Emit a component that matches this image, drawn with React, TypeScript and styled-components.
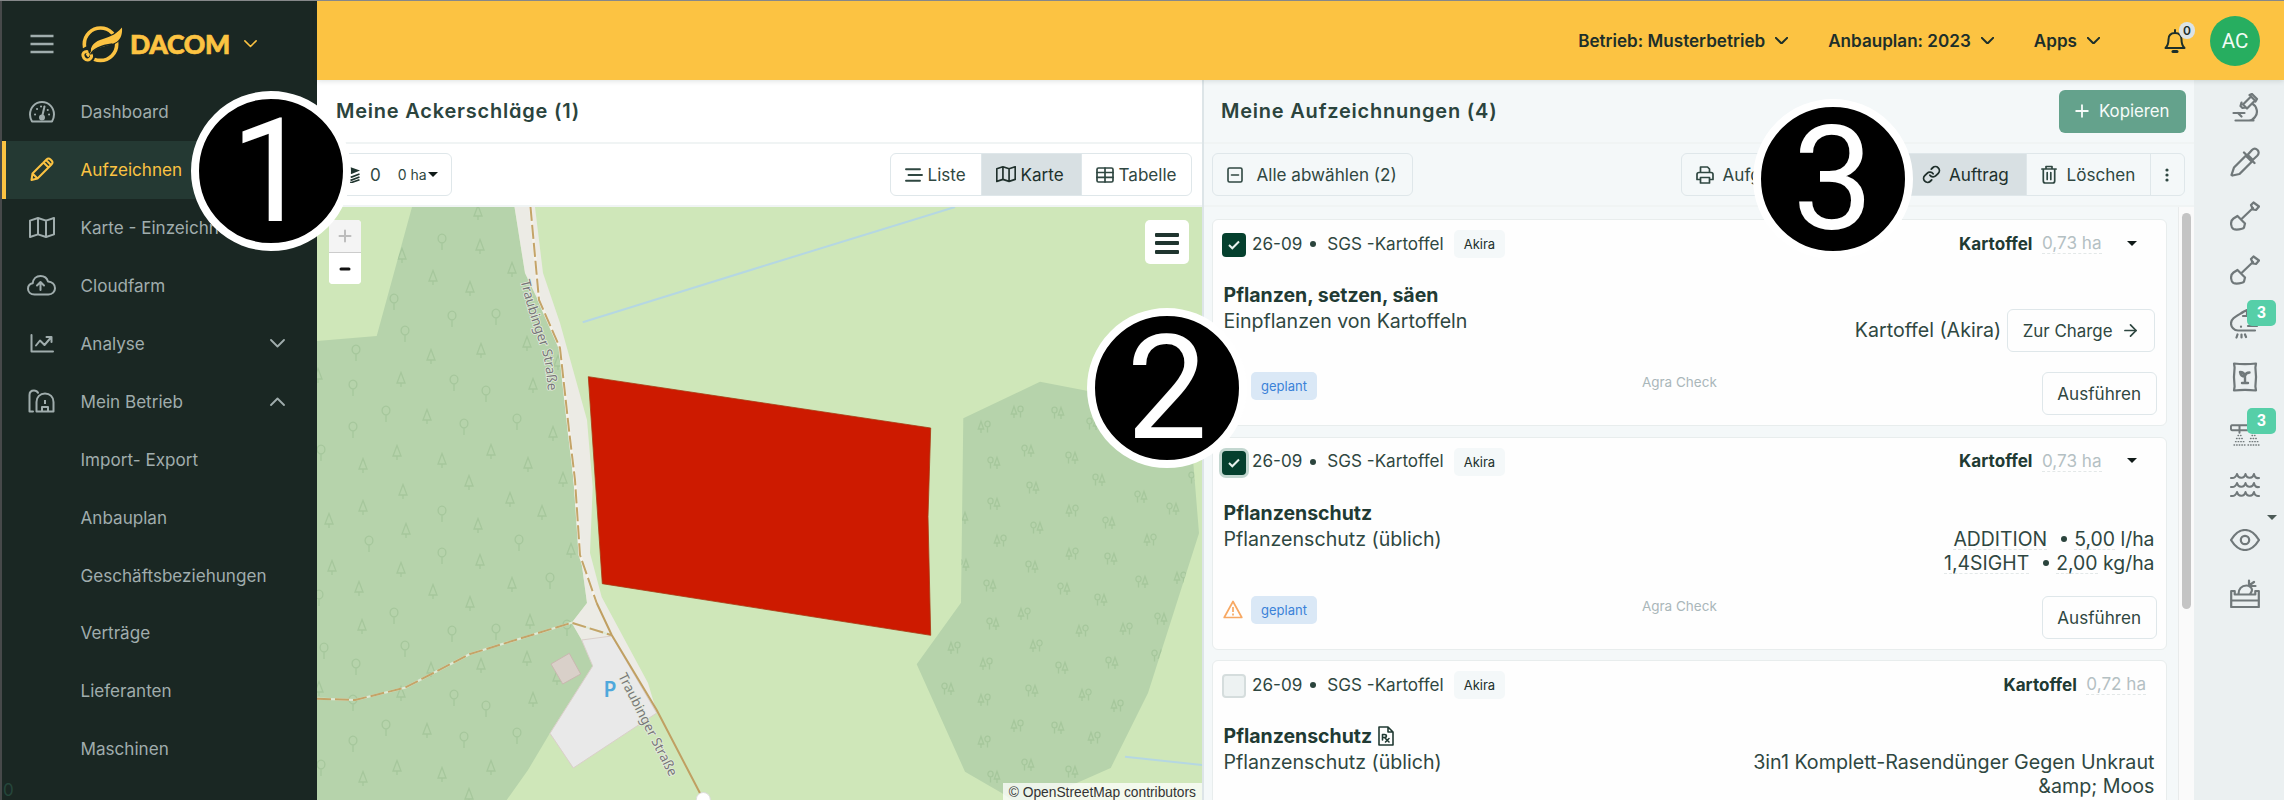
import React from "react";
import styled, { createGlobalStyle, css } from "styled-components";
import { ArrowRight, Plus } from "lucide-react";

const GlobalStyle = createGlobalStyle`
  * { box-sizing: border-box; }
  html, body { margin: 0; padding: 0; overflow: hidden; }
  body { font-family: Inter, "Liberation Sans", sans-serif; font-size: 17.1px; color: #2f4741; background: #fff; }
`;

/* ---------- shell ---------- */

const Shell = styled.div`
  position: relative;
  display: flex;
  width: 2284px;
  height: 800px;
  overflow: hidden;
  border-top: 1px solid #86888a;
`;

const Main = styled.div`
  flex: 1;
  display: flex;
  flex-direction: column;
  min-width: 0;
`;

const Content = styled.div`
  flex: 1;
  display: flex;
  min-height: 0;
`;

/* ---------- sidebar ---------- */

const Sidebar = styled.nav`
  position: relative;
  width: 317px;
  flex: none;
  display: flex;
  flex-direction: column;
  background: #1a2723;
  border-left: 2px solid #47494a;
  color: #a0adad;
`;

const Brand = styled.div`
  height: 82px;
  flex: none;
  display: flex;
  align-items: center;
  padding: 4px 0 0 28px;
  color: #fcc342;
`;

const MenuGlyph = styled.span`
  display: flex;
  margin-right: 27px;
  color: #a0adad;
`;

const BrandName = styled.span`
  margin: 0 14px 0 7px;
  font-family: Lato, sans-serif;
  font-weight: 900;
  font-size: 26.5px;
  line-height: 30px;
  letter-spacing: -0.3px;
  -webkit-text-stroke: 0.7px #fcc342;
`;

const NavItem = styled.a<{ $active?: boolean }>`
  height: 57.9px;
  flex: none;
  display: flex;
  align-items: center;
  padding: 0 32px 0 ${(p) => (p.$active ? "20.5px" : "24.5px")};
  border-left: ${(p) => (p.$active ? "4px solid #fcc342" : "0")};
  background: ${(p) => (p.$active ? "#243933" : "transparent")};
  color: ${(p) => (p.$active ? "#fcc342" : "inherit")};
  white-space: nowrap;
`;

const NavIcon = styled.span`
  width: 30px;
  display: flex;
  justify-content: center;
  margin-right: 24px;
`;

const NavLabel = styled.span`
  flex: 1;
`;

const FaintCount = styled.span`
  position: absolute;
  left: 1px;
  bottom: 1px;
  font-size: 17px;
  line-height: 17px;
  color: #25463b;
`;

/* ---------- top bar ---------- */

const TopBar = styled.header`
  position: relative;
  z-index: 1;
  height: 79px;
  flex: none;
  display: flex;
  align-items: center;
  justify-content: flex-end;
  padding-right: 24px;
  background: #fcc342;
  color: #1d2f2a;
  font-weight: 600;
  font-size: 17.1px;
  box-shadow: 0 1px 5px rgba(40, 60, 60, 0.16);
`;

const Picker = styled.button<{ $gap: number }>`
  display: flex;
  align-items: center;
  gap: 10px;
  margin: 0 ${(p) => p.$gap}px 0 0;
  padding: 0;
  border: 0;
  background: none;
  font: inherit;
  color: inherit;
`;

const BellBox = styled.span`
  position: relative;
  display: flex;
  margin-right: 24px;
`;

const BellCount = styled.span`
  position: absolute;
  left: 15px;
  top: -6px;
  width: 16px;
  height: 17px;
  border-radius: 8px;
  background: #dbe2e5;
  font-size: 12px;
  line-height: 17px;
  text-align: center;
`;

const Avatar = styled.span`
  width: 50px;
  height: 50px;
  border-radius: 50%;
  background: #27ae60;
  color: #f2fbf5;
  font: 400 20.5px/50px Roboto, sans-serif;
  text-align: center;
`;

/* ---------- panels ---------- */

const FieldsPanel = styled.section`
  width: 887px;
  flex: none;
  display: flex;
  flex-direction: column;
  background: #fff;
  border-right: 2px solid #dde5e8;
`;

const RecordsPanel = styled.section`
  flex: 1;
  display: flex;
  flex-direction: column;
  min-width: 0;
  background: #f4f8f9;
`;

const PanelHead = styled.div<{ $left: number }>`
  height: 64px;
  flex: none;
  display: flex;
  align-items: center;
  justify-content: space-between;
  padding: 0 8.5px 0 ${(p) => p.$left}px;
  border-bottom: 2px solid #f0f4f4;
`;

const PanelTitle = styled.h2`
  margin: 0;
  font-size: 20px;
  font-weight: 580;
  letter-spacing: 0.78px;
  font-feature-settings: "cv11";
  color: #2b443d;
`;

const Toolbar = styled.div<{ $left: number; $right: number }>`
  height: 63px;
  flex: none;
  display: flex;
  align-items: center;
  justify-content: space-between;
  padding: 0 ${(p) => p.$right}px 0 ${(p) => p.$left}px;
  border-bottom: 2px solid #f0f4f4;
`;

const outline = css`
  border: 1.5px solid #dfe7ea;
  border-radius: 6px;
  background: transparent;
  font: inherit;
  color: inherit;
  white-space: nowrap;
`;

const OutlineButton = styled.button<{ $pad: string; $gap?: number }>`
  ${outline}
  height: 43px;
  display: flex;
  align-items: center;
  gap: ${(p) => p.$gap ?? 0}px;
  padding: ${(p) => p.$pad};
`;

const PrimaryButton = styled(OutlineButton)`
  border: 0;
  background: #64a28c;
  color: #f6fbf9;
  font-size: 16.8px;
`;

const RunButton = styled(OutlineButton)`
  margin-right: -2px;
`;

const Group = styled.div`
  height: 43px;
  display: flex;
  ${outline}
  overflow: hidden;
`;

const Segment = styled.button<{ $w: number; $gap: number; $on?: boolean; $pad?: number }>`
  width: ${(p) => p.$w}px;
  display: flex;
  align-items: center;
  gap: ${(p) => p.$gap}px;
  padding: 0 0 0 ${(p) => p.$pad ?? 13.5}px;
  border: 0;
  background: ${(p) => (p.$on ? "#d8e0e3" : "transparent")};
  color: ${(p) => (p.$on ? "#20302c" : "#2f4741")};
  font: inherit;
  white-space: nowrap;
  overflow: hidden;
  & + & { border-left: 1px solid #dfe7ea; }
`;

const Count = styled.span`
  margin-left: 10px;
`;

const SmallText = styled.span`
  font-size: 14px;
  margin-left: 17px;
`;

const Caret = styled.i<{ $left?: number; $color?: string }>`
  display: inline-block;
  margin-left: ${(p) => p.$left ?? 0}px;
  border: 5px solid transparent;
  border-top-color: ${(p) => p.$color ?? "#101a18"};
  border-bottom: 0;
`;

/* ---------- map ---------- */

const MapArea = styled.div`
  position: relative;
  flex: 1;
  background: #cfe7b9;
  overflow: hidden;
`;

const MapCanvas = styled.svg`
  display: block;
`;

const ZoomControl = styled.div`
  position: absolute;
  left: 12px;
  top: 13px;
  width: 32px;
  border-radius: 4px;
  overflow: hidden;
  background: #fff;
`;

const ZoomButton = styled.div<{ $off?: boolean }>`
  height: 32px;
  display: flex;
  align-items: center;
  justify-content: center;
  background: ${(p) => (p.$off ? "#f4f4f4" : "#fff")};
  color: ${(p) => (p.$off ? "#bdbdbd" : "#111")};
  & + & { border-top: 1px solid #ccc; }
`;

const LayersButton = styled.div`
  position: absolute;
  right: 13px;
  top: 13px;
  width: 44px;
  height: 44px;
  display: flex;
  flex-direction: column;
  align-items: center;
  justify-content: center;
  gap: 4.5px;
  padding-top: 2px;
  border-radius: 5px;
  background: #fff;
`;

const Bar = styled.i`
  width: 24px;
  height: 4px;
  border-radius: 1px;
  background: #20352f;
`;

const Attribution = styled.div`
  position: absolute;
  right: 0;
  bottom: 0;
  height: 17px;
  padding: 0 6px;
  background: rgba(255, 255, 255, 0.75);
  color: #333;
  font: 13.8px/19px "Liberation Sans", sans-serif;
`;

/* ---------- records ---------- */

const Scroller = styled.div`
  flex: 1;
  display: flex;
  min-height: 0;
  overflow: hidden;
`;

const CardList = styled.div`
  flex: 1;
  display: flex;
  flex-direction: column;
  gap: 10.6px;
  padding: 12px 11.5px 0 7.5px;
`;

const Track = styled.div`
  width: 16px;
  flex: none;
  padding: 6px 3px 0 3px;
  background: #fafafa;
  border-left: 1px solid #e8ebeb;
`;

const Thumb = styled.div`
  width: 9px;
  height: 396px;
  border-radius: 5px;
  background: #c4c4c4;
`;

const Card = styled.article<{ $h: number }>`
  height: ${(p) => p.$h}px;
  flex: none;
  display: flex;
  flex-direction: column;
  padding: 0 11px 0 11px;
  border: 1.5px solid #e8eded;
  border-radius: 6px;
  background: #fefefe;
`;

const CardHead = styled.div<{ $right: number }>`
  height: 51px;
  flex: none;
  display: flex;
  align-items: center;
  padding: 0 ${(p) => p.$right}px 5px 0;
`;

const Check = styled.span<{ $on?: boolean; $focus?: boolean }>`
  width: 24px;
  height: 24px;
  flex: none;
  display: flex;
  align-items: center;
  justify-content: center;
  margin: 4px 6px 0 -1.5px;
  border-radius: 4px;
  border: ${(p) => (p.$on ? "0" : "2px solid #d5dddd")};
  background: ${(p) => (p.$on ? "#05402e" : "#edf2f2")};
  box-shadow: ${(p) => (p.$focus ? "0 0 0 3px #c3d7d0" : "none")};
`;

const Dot = styled.i`
  width: 6px;
  height: 6px;
  border-radius: 50%;
  background: #2b443d;
  margin: 2px 11px 0 8px;
`;

const Pill = styled.span<{ $plan?: boolean }>`
  height: 28px;
  padding: 0 10px;
  border-radius: 5px;
  background: ${(p) => (p.$plan ? "#dae8f6" : "#f4f8f9")};
  color: ${(p) => (p.$plan ? "#3b82d8" : "#22302c")};
  font-size: 13px;
  line-height: 28px;
`;

const Variety = styled(Pill)`
  margin: 2px 0 0 10px;
`;

const Crop = styled.b`
  margin-left: auto;
  font-weight: 700;
  color: #213a33;
`;

const Area = styled.span`
  margin-left: 9.5px;
  color: #b4c0c3;
  border-bottom: 1px dashed #e3e8e8;
`;

const CardBody = styled.div`
  flex: 1;
  display: flex;
  justify-content: space-between;
  font-size: 19.6px;
`;

const Summary = styled.div`
  padding-top: 11px;
  line-height: 26px;
`;

const SummaryTitle = styled.div`
  display: flex;
  align-items: center;
  gap: 6px;
  font-weight: 700;
  font-size: 19.5px;
  color: #213a33;
`;

const Products = styled.div`
  padding-top: 38px;
  font-size: 19.68px;
  line-height: 24px;
  text-align: right;
  white-space: pre-line;
`;

const ProductLine = styled.div`
  display: flex;
  align-items: center;
  justify-content: flex-end;
  gap: 5.5px;
  font-size: 19.4px;
`;

const Dashed = styled.span`
  height: 23.5px;
  border-bottom: 1px dashed #e3e8e8;
`;

const ProductDot = styled(Dot)`
  margin: 1px 2px 0 8px;
`;

const ChargeRow = styled(ProductLine)`
  font-size: 19.6px;
`;

const ChargeText = styled.span`
  padding-bottom: 2px;
`;

const ChargeButton = styled(OutlineButton)`
  font-size: 16.9px;
`;

const CardFoot = styled.div`
  height: 53px;
  flex: none;
  display: flex;
  align-items: flex-start;
`;

const FootIcon = styled.span`
  width: 28.5px;
  display: flex;
  padding-top: 4px;
  margin-left: -1px;
`;

const Source = styled.span`
  flex: 1;
  padding-left: 325px;
  font-size: 13.5px;
  line-height: 21px;
  color: #aab7ba;
`;

/* ---------- tool rail ---------- */

const Rail = styled.aside`
  width: 90px;
  flex: none;
  display: flex;
  flex-direction: column;
  padding: 1px 0 0 12px;
  background: #ebf0f1;
  color: #70787a;
`;

const Tool = styled.div<{ $drop?: number }>`
  position: relative;
  height: 53.9px;
  flex: none;
  display: flex;
  align-items: center;
  justify-content: center;
  padding-top: ${(p) => p.$drop ?? 0}px;
`;

const ToolCount = styled.span`
  position: absolute;
  left: 41px;
  top: 3.5px;
  width: 29px;
  height: 26px;
  border-radius: 5px;
  background: #56cfa8;
  color: #fff;
  font: 700 16px/26px "Liberation Sans", sans-serif;
  text-align: center;
`;

const ToolCaret = styled.span`
  position: absolute;
  right: 7px;
  top: 3px;
  display: flex;
`;

/* ---------- step markers ---------- */

const Step = styled.div<{ $x: number; $y: number }>`
  position: absolute;
  z-index: 5;
  left: ${(p) => p.$x - 80}px;
  top: ${(p) => p.$y - 81}px;
  width: 160px;
  height: 160px;
  border: 8.5px solid #fff;
  border-radius: 50%;
  background: #000;
  color: #fff;
  font: 400 144px/145px Roboto, sans-serif;
  text-align: center;
`;

/* ---------- drawings ---------- */

type IconProps = { w?: number; h?: number; box?: string; sw?: number; children: React.ReactNode };
const Icon = ({ w = 26, h = 26, box = "0 0 26 26", sw = 2, children }: IconProps) => (
  <svg width={w} height={h} viewBox={box} fill="none" stroke="currentColor" strokeWidth={sw} strokeLinecap="round" strokeLinejoin="round">
    {children}
  </svg>
);

const Chevron = ({ up, w = 15, sw = 1.8 }: { up?: boolean; w?: number; sw?: number }) => (
  <Icon w={w} h={w * 0.6} box="0 0 15 9" sw={sw}>
    <path d={up ? "M1 8 7.5 1.5 14 8" : "M1 1 7.5 7.5 14 1"} />
  </Icon>
);

const MapIcon = ({ w = 26, sw = 2 }: { w?: number; sw?: number }) => (
  <Icon w={w} h={(w * 21) / 26} box="0 0 26 21" sw={sw}>
    <path d="M1 3.6 9 1l8 2.6L25 1v16.4l-8 2.6-8-2.6L1 20ZM9 1v16.4M17 3.6V20" />
  </Icon>
);

const LogoMark = () => (
  <svg width="42" height="38" viewBox="82 25 42 38" fill="none">
    <circle cx="101.5" cy="44.2" r="16.2" stroke="#fcc342" strokeWidth="3.6" />
    <path d="M123 27.5c.6 6-1.4 11.5-5.5 14.5C110 47 98 45 91.5 55c-1.5-7 2-12.5 9-15C108 37 116 36 123 27.5Z" fill="#fcc342" stroke="#1a2723" strokeWidth="2" />
    <path d="M123 27.5c-7 8.500-14 9.500-22 12.500-7 2.500-10.500 8-9.500 15 6-10 18-8 26-13 4.500-3 6-8.500 5.500-14.500Z" fill="#fcc342" />
    <path d="M92 49c-5-.5-8.500 2.500-8 6.500s4.500 6 7.500 3.800c2-1.500 2-3.500 1-5" stroke="#1a2723" strokeWidth="6" />
    <path d="M88 51.500c-3 0-4.500 2-4 4.500.7 3.500 4.500 5 7 3 1.800-1.500 1.900-3.300.8-4.800" stroke="#fcc342" strokeWidth="3" strokeLinecap="round" />
    <path d="M91.500 54.500c3-6 11-9 22-10.500" stroke="#1a2723" strokeWidth="1.500" />
  </svg>
);

const navIcons = {
  gauge: (
    <Icon w={26} h={22} box="0 0 26 22">
      <path d="M3 20.500C1.500 18 1 16 1 13.500 1 6.500 6.300 1 13 1s12 5.500 12 12.500c0 2.500-.5 4.500-2 7Z" />
      <path d="M15.500 5.500 13.500 14" />
      <circle cx="13" cy="16.500" r="2" fill="currentColor" />
      <path d="M6 13.500h.1M20 13.500h.1M8 8h.1M18.700 9h.1M12 5.500h.1" />
    </Icon>
  ),
  pencil: (
    <Icon w={24} h={25} box="0 0 24 25">
      <path d="M2.500 16.500 16.500 2.500c1.300-1.300 2.700-1.300 4 0l1 1c1.300 1.300 1.300 2.700 0 4L7.500 21.500 1.500 23ZM13.500 5.500l5 5M2.500 16.500l5 5M16 3l5 5" />
    </Icon>
  ),
  cloud: (
    <Icon w={29} h={21} box="0 0 29 21">
      <path d="M7.500 19.500C3.500 19.500 1 17 1 13.800c0-2.800 2-5 4.700-5.500C6.200 4 9.300 1 13.500 1c3.600 0 6.500 2 7.500 5.500 4 .3 7 3 7 6.700 0 3.500-2.700 6.300-6.500 6.300ZM13.500 15V7.500M10 10.500l3.500-3.500 3.500 3.500" />
    </Icon>
  ),
  chart: (
    <Icon w={24} h={19} box="0 0 24 19">
      <path d="M1.500 1v16.500H23M6 11.500l4-5 4.500 4.500 6-7M16.500 3h5v5" />
    </Icon>
  ),
  barn: (
    <Icon w={27} h={24} box="0 0 27 24">
      <path d="M5 22.500H1.500V6c0-3 2-4.500 4.500-4.500 2 0 3.200.8 4 2.300M8.500 22.500V13c0-5 3.500-8.500 8.500-8.500s8.500 3.500 8.500 8.500v9.500ZM14 22.500v-4.500h6v4.500" />
      <path d="M16 13h2" strokeWidth="4" strokeLinecap="butt" />
    </Icon>
  ),
};

const gridIcon = (
  <Icon w={18} h={16} box="0 0 18 16" sw={1.7}>
    <rect x="1" y="1" width="16" height="14" rx="1.500" />
    <path d="M1 5.500h16M1 10.300h16M9 1v14" />
  </Icon>
);

const listIcon = (
  <Icon w={18} h={14} box="0 0 18 14" sw={1.9}>
    <path d="M1 1.200h14M3.500 7H17M1 12.800h14" />
  </Icon>
);

const minusBox = (
  <Icon w={16} h={16} box="0 0 16 16" sw={1.6}>
    <rect x="1" y="1" width="14" height="14" rx="1.500" />
    <path d="M4.500 8h7" />
  </Icon>
);

const printIcon = (
  <Icon w={18} h={18} box="0 0 18 18" sw={1.7}>
    <path d="M4.500 6.500V1h7l2 2v3.500M4 13.500H1V8.500c0-1.300.8-2 2-2h12c1.200 0 2 .7 2 2v5h-3M4.500 11.500h9V17h-9Z" />
  </Icon>
);

const chainIcon = (
  <Icon w={19} h={19} box="0 0 24 24" sw={2.300}>
    <path d="M10 13a5 5 0 0 0 7.540.540l3-3a5 5 0 0 0-7.070-7.070l-1.720 1.710M14 11a5 5 0 0 0-7.540-.540l-3 3a5 5 0 0 0 7.070 7.070l1.710-1.710" />
  </Icon>
);

const trashIcon = (
  <Icon w={16} h={19} box="0 0 16 19" sw={1.700}>
    <path d="M.9 4h14.200M5 4V1.500h6V4M2.300 4v12c0 1.200.8 2 2 2h7.400c1.200 0 2-.8 2-2V4M6.200 7.500v7M9.800 7.500v7" />
  </Icon>
);

const kebab = (
  <svg width="4" height="14" viewBox="0 0 4 14" fill="currentColor">
    <circle cx="2" cy="2" r="1.600" /><circle cx="2" cy="7" r="1.600" /><circle cx="2" cy="12" r="1.600" />
  </svg>
);

const fieldIcon = (
  <svg width="17" height="17" viewBox="0 0 17 17">
    <path d="M0 1h7l10 3.500L8.500 8 0 6Z" fill="#20352f" />
    <path d="M2 9.500 8.500 11l8-3M2 12.500l6.500 1.500 8-3M2 15.500l6.500 1 8-2.800" stroke="#20352f" strokeWidth="1.700" fill="none" />
  </svg>
);

const shovel = (
  <Icon w={30} h={30} box="0 0 30 30" sw={2.200}>
    <path d="M7.500 15 15 22.500l-1 4c-1 2-8.500 2.500-10.500 1.500-3-2-3.500-8 0-10.500ZM11 18.500 23 7M21 4l2.500-2.500L29 5.500 26 9l-3-.5Z" />
  </Icon>
);

const tools: { icon: React.ReactNode; count?: number; caret?: boolean; drop?: number }[] = [
  {
    icon: (
      <Icon w={27} h={29} box="0 0 27 29" sw={2.200}>
        <path d="M3.500 27.500h18M1.500 20h11M6 20l3.500 3.500M20 10.500c5 2.500 6.500 9.500 3 13.500-1.500 2-3.500 3.500-6 3.500M11 11.500l8-8 4 4-8 8ZM17.500 2 20 .9 25 6l-1.500 2.500M9.500 9.500 8.500 13l2 2 3.500-.5" />
      </Icon>
    ),
  },
  {
    icon: (
      <Icon w={30} h={30} box="0 0 30 30" sw={2.300}>
        <path d="M16.500 8 4 20.500 1.500 28l1 .5 7-1.500L22 14.500M14 5.500 24.500 16M17 8.500 22 3c2-2 4-1.500 5.500 0s1.500 4-.5 6l-5.500 5" />
        <path d="m17.500 9 4 4" strokeWidth="4" />
      </Icon>
    ),
  },
  { icon: shovel },
  { icon: shovel },
  {
    icon: (
      <Icon w={30} h={30} box="0 0 30 30" sw={2.200}>
        <path d="M25 21.500H8C4 21.500 1 18 1 14.500 1 9 7 7 14 2.500l3-1.500v6h-4M18 17h9M11 17.500v.3M7.500 25.500 6.500 28.500M11.500 25.500v3M15 25.500l1 2.500" />
      </Icon>
    ),
    count: 3,
  },
  {
    icon: (
      <Icon w={26} h={30} box="0 0 26 30" sw={2.200}>
        <path d="M2 1.500c7 .8 15 .8 22 0l-.6 4c.8 6 .8 13 0 19l.6 4c-7-.8-15-.8-22 0l.6-4c-.8-6-.8-13 0-19Z" />
        <path d="M13 21v-6.500c-3.500 0-4.500-1.500-5-4.500 3 0 4.500 1.500 5 4 .5-2.500 2-3.500 4.500-3.500M10 21h6" strokeWidth="2.400" />
      </Icon>
    ),
  },
  {
    icon: (
      <Icon w={30} h={22} box="0 0 30 22">
        <path d="M2 1.200h26v5H2c-1.500 0-1.500-5 0-5ZM9.500 1.200v7.500M23.500 6v3" />
        <path d="M8 11.500h3M6.500 14.500h6M5.500 17.700h8.500M4 21h11.500M22 11.500h3M20.500 14.500h6M19.500 17.700h8.500M18 21h11.500" strokeWidth="1.300" strokeDasharray="0.6 2" />
      </Icon>
    ),
    count: 3,
    drop: 7,
  },
  {
    icon: (
      <Icon w={30} h={26} box="0 0 30 26" sw={2}>
        {[5, 14, 23].map((y) => (
          <path key={y} d={`M1 ${y}c3 .5 5-1 6-4 1 4.500 7 5.500 8.500 0 1.500 5.500 7.500 4.500 8.500 0 .6 3 2.500 4.500 5 4`} />
        ))}
      </Icon>
    ),
    drop: 1,
  },
  {
    icon: (
      <Icon w={30} h={22} box="0 0 30 22" sw={2.200}>
        <path d="M1 11C5 4.500 9.500 1 15 1s10 3.500 14 10c-4 6.500-8.500 10-14 10S5 17.500 1 11Z" />
        <circle cx="15" cy="11" r="4.200" />
      </Icon>
    ),
    caret: true,
    drop: 1,
  },
  {
    icon: (
      <Icon w={30} h={29} box="0 0 30 29" sw={2.200}>
        <path d="M1.200 28V12h3.500v3.500h20.600V12h3.500v16ZM1.200 21.500h27.600M8.500 15c0-5 3-8.500 8-8.500 3 0 5.500 2.500 5.500 4.500s-1.500 3-2 4M19 1.500v5M19 6.500l5-3.500M19.500 7h6" />
      </Icon>
    ),
    drop: 2,
  },
];

/* ---------- map drawing ---------- */

const roundTrees: [number, number][] = [
  [442, 241], [394, 301], [452, 318], [496, 316], [405, 333], [356, 352], [353, 387], [454, 382], [486, 393], [386, 413], [464, 426], [517, 421],
  [353, 429], [321, 452], [442, 513], [369, 543], [442, 555], [519, 542], [550, 580], [394, 615], [452, 633], [496, 631], [405, 648], [324, 650],
  [356, 666], [353, 702], [454, 697], [486, 708], [386, 727], [464, 739], [517, 735], [353, 743], [321, 767], [567, 627], [319, 597],
];
const firTrees: [number, number][] = [
  [478, 212], [480, 246], [402, 255], [433, 277], [470, 288], [512, 269], [431, 356], [481, 350], [527, 343], [401, 379], [533, 385], [427, 416],
  [558, 362], [318, 375], [553, 433], [363, 465], [397, 452], [442, 460], [491, 451], [528, 464], [469, 482], [563, 479], [403, 491], [510, 499],
  [363, 507], [542, 512], [329, 520], [406, 530], [478, 525], [571, 550], [332, 567], [401, 569], [480, 561], [359, 588], [433, 591], [512, 584],
  [470, 603], [362, 626], [530, 621], [431, 669], [481, 665], [527, 658], [401, 693], [533, 699], [427, 730], [397, 767], [442, 774], [491, 767],
  [363, 778], [469, 795], [557, 677], [319, 688],
];
const firFirst: [number, number][] = [
  [984, 427], [1000, 541], [1072, 511], [1072, 554], [1024, 614], [954, 648], [1036, 646], [986, 664], [1082, 631], [1126, 629], [984, 700],
  [1085, 695], [1017, 726], [1117, 706], [984, 742], [1094, 738], [1150, 540], [1180, 578], [1017, 412],
];
const roundFirst: [number, number][] = [
  [1028, 451], [994, 463], [1072, 458], [1033, 488], [994, 504], [1037, 528], [1099, 480], [1141, 497], [1173, 509], [1109, 523], [1032, 567],
  [990, 586], [1064, 589], [1111, 559], [1101, 600], [1142, 582], [993, 624], [1161, 619], [1062, 668], [1112, 663], [948, 689], [1032, 691],
  [1058, 728], [1028, 765], [994, 777], [1072, 772], [1195, 478], [1158, 656], [963, 565], [962, 518], [1058, 413], [1093, 424],
];
const roundTree = (x: number, y: number, rx = 3.9, ry = 4.4, stem = 7) =>
  `M${x - rx} ${y - 2.500}a${rx} ${ry} 0 1 0 ${rx * 2} 0a${rx} ${ry} 0 1 0 ${-rx * 2} 0M${x} ${y + ry - 2.500}v${stem}`;
const firTree = (x: number, y: number, half = 4, h = 10.500) => `M${x} ${y - 6.500}l${half} ${h}h${-half * 2}ZM${x} ${y - 6.500 + h}v4`;
const westTrees = roundTrees.map(([x, y]) => roundTree(x, y)).join("") + firTrees.map(([x, y]) => firTree(x, y)).join("");
const smallRound = (x: number, y: number) => roundTree(x, y - 0.500, 2.600, 2.900, 5.500);
const smallFir = (x: number, y: number) => firTree(x, y + 1, 2.700, 7.500);
const eastTrees =
  firFirst.map(([x, y]) => smallFir(x - 3, y) + smallRound(x + 3.500, y)).join("") +
  roundFirst.map(([x, y]) => smallRound(x - 3.500, y) + smallFir(x + 3, y)).join("");

const westForest = "412,207 376.700,336 317,341 317,800 506.700,800 528,770 550,733 592.700,666 581.700,640 571.700,622.700 587,603 579.500,548 569,430 560,347 525,273 514.500,207";
const eastForest = "963.300,418.300 1040,381.700 1086.700,390.700 1185,405 1193.300,463 1199,533.300 1148,693 1110.700,768 1076.700,783 1030,800 1012,800 1001.700,793 965,771.700 916.700,664.300 961,602.700";
const track = "M530.500 207 539 300 560 348 569 430 575 480 580 555 596.700 603";
const footpath = "M317 698.700 355 700 405 687.700 470 654 571.700 622.700 611 635";

const FieldMap = () => (
  <MapCanvas width="885" height="593" viewBox="317 207 885 593">
    <defs>
      <clipPath id="west"><polygon points={westForest} /></clipPath>
      <clipPath id="east"><polygon points={eastForest} /></clipPath>
      <path id="roadNorth" d="M520.500 281C526 304 534 328 540 345S546 372 548.500 396" />
      <path id="roadSouth" d="M618 676 671 780" />
    </defs>
    <polygon points={westForest} fill="#b6d3ab" />
    <polygon points={eastForest} fill="#b6d3ab" />
    <g stroke="#a6c79c" strokeWidth="1.300" fill="none">
      <path d={westTrees} clipPath="url(#west)" />
      <path d={eastTrees} clipPath="url(#east)" />
    </g>
    <path d="M582.700 322.300 770 264 955 207M1125 756.700 1202 765" stroke="#b5d7e2" strokeWidth="2" fill="none" />
    <polygon points="514.500,207 535,207 543,273 560,323 587,420 592.700,487 590,553 601.700,597 648,683 656.700,712 611,640 581.700,640 571.700,622.700 587,603 579.500,548 569,430 560,347 538,300 525,273" fill="#ecebe5" />
    <polygon points="581.700,640 611.700,636 656.700,713 573.300,768 550,733.300 592.700,666" fill="#e9e9e9" stroke="#dacfca" />
    <polygon points="551,664 569.300,653.300 580.700,674 562.700,684" fill="#d9d0c9" stroke="#c9b8b0" />
    <g fill="none" strokeLinejoin="round">
      <path d={track} stroke="#f4f1ea" strokeWidth="3" />
      <path d={footpath} stroke="#dfe9d5" strokeWidth="2.200" />
      <path d={track} stroke="#c4a468" strokeWidth="2" strokeDasharray="14 4" />
      <path d={footpath} stroke="#c4a468" strokeWidth="2" strokeDasharray="14 4" />
      <path d="M596.700 603 611.700 635 656.700 710 702 797" stroke="#c0a062" strokeWidth="2" />
    </g>
    <circle cx="703.300" cy="799.500" r="7" fill="#fff" stroke="#ddd" />
    <polygon points="588.300,376.700 930.700,428 928,516.700 930.700,635.300 602.300,583.700" fill="#cd1a00" stroke="#a83a10" strokeWidth="0.800" />
    <g fontFamily="Noto Sans, sans-serif" fill="#777" stroke="#e6ebe0" strokeWidth="1.500" paintOrder="stroke" fontSize="13.400">
      <text><textPath href="#roadNorth">Traubinger Straße</textPath></text>
      <text><textPath href="#roadSouth">Traubinger Straße</textPath></text>
    </g>
    <text x="603.500" y="697" fontFamily="Noto Sans, sans-serif" fontSize="21" fontWeight="600" fill="#4fa8dc">P</text>
  </MapCanvas>
);

/* ---------- data ---------- */

const nav: { label: string; icon?: React.ReactNode; active?: boolean; chevron?: "up" | "down" }[] = [
  { label: "Dashboard", icon: navIcons.gauge },
  { label: "Aufzeichnen", icon: navIcons.pencil, active: true },
  { label: "Karte - Einzeichnen", icon: <MapIcon /> },
  { label: "Cloudfarm", icon: navIcons.cloud },
  { label: "Analyse", icon: navIcons.chart, chevron: "down" },
  { label: "Mein Betrieb", icon: navIcons.barn, chevron: "up" },
  { label: "Import- Export" },
  { label: "Anbauplan" },
  { label: "Geschäftsbeziehungen" },
  { label: "Verträge" },
  { label: "Lieferanten" },
  { label: "Maschinen" },
];

type RecordProps = {
  height: number;
  title: string;
  subtitle: string;
  area: string;
  checked?: boolean;
  focus?: boolean;
  menu?: boolean;
  warn?: boolean;
  prescription?: boolean;
  planned?: boolean;
  children: React.ReactNode;
};

const RecordCard = ({ height, title, subtitle, area, checked, focus, menu, warn, prescription, planned, children }: RecordProps) => (
  <Card $h={height}>
    <CardHead $right={menu ? 17.5 : 8.5}>
      <Check $on={checked} $focus={focus}>
        {checked && (
          <svg width="12" height="10" viewBox="0 0 12 10" fill="none" stroke="#e8f3ee" strokeWidth="2">
            <path d="m1 5 3.300 3.300L11 1.500" />
          </svg>
        )}
      </Check>
      <span>26-09</span>
      <Dot />
      <span>SGS -Kartoffel</span>
      <Variety>Akira</Variety>
      <Crop>Kartoffel</Crop>
      <Area>{area}</Area>
      {menu && <Caret $left={25.5} />}
    </CardHead>
    <CardBody>
      <Summary>
        <SummaryTitle>
          {title}
          {prescription && (
            <Icon w={16} h={20} box="0 0 16 20" sw={1.600}>
              <path d="M1 1h9l5 5v13H1ZM10 1v5h5M4.500 14V8.500h2c2.500 0 2.500 3 0 3h-2M6.500 11.500l4.500 4.500M11 12.500l-3.500 3.500" />
            </Icon>
          )}
        </SummaryTitle>
        {subtitle}
      </Summary>
      <Products>{children}</Products>
    </CardBody>
    {planned && (
      <CardFoot>
        <FootIcon>
          {warn && (
            <svg width="20" height="19" viewBox="0 0 20 19" fill="none" stroke="#f7a863" strokeWidth="1.700" strokeLinejoin="round">
              <path d="M10 1.500 18.800 17.500H1.200ZM10 7v5M10 13.500v2" />
            </svg>
          )}
        </FootIcon>
        <Pill $plan>geplant</Pill>
        <Source>Agra Check</Source>
        <RunButton $pad="0 14.5px">Ausführen</RunButton>
      </CardFoot>
    )}
  </Card>
);

const Product = ({ name, dose, unit }: { name: string; dose: string; unit: string }) => (
  <ProductLine>
    <Dashed>{name}</Dashed>
    <ProductDot />
    <Dashed>{dose}</Dashed>
    <span>{unit}</span>
  </ProductLine>
);

export default function App() {
  return (
    <>
      <GlobalStyle />
      <Shell>
        <Sidebar>
          <Brand>
            <MenuGlyph>
              <svg width="24" height="20" viewBox="0 0 24 20" fill="none" stroke="currentColor" strokeWidth="2.500">
                <path d="M.5 2h23M.5 10h23M.5 18h23" />
              </svg>
            </MenuGlyph>
            <LogoMark />
            <BrandName>DACOM</BrandName>
            <Chevron w={13} />
          </Brand>
          {nav.map((n) => (
            <NavItem key={n.label} $active={n.active}>
              <NavIcon>{n.icon}</NavIcon>
              <NavLabel>{n.label}</NavLabel>
              {n.chevron && <Chevron up={n.chevron === "up"} />}
            </NavItem>
          ))}
          <FaintCount>0</FaintCount>
        </Sidebar>

        <Main>
          <TopBar>
            <Picker $gap={40}>Betrieb: Musterbetrieb <Chevron w={13} sw={2.400} /></Picker>
            <Picker $gap={40}>Anbauplan: 2023 <Chevron w={13} sw={2.400} /></Picker>
            <Picker $gap={64}>Apps <Chevron w={13} sw={2.400} /></Picker>
            <BellBox>
              <Icon w={22} h={26} box="0 0 22 26">
                <path d="M1.500 20h19c-2.500-2.500-3-4.500-3-8.500 0-4-2.500-6.500-6.500-6.500s-6.500 2.500-6.500 6.500c0 4-.5 6-3 8.500ZM11 5V2" />
                <path d="M9 23.500h4" strokeWidth="3" />
              </Icon>
              <BellCount>0</BellCount>
            </BellBox>
            <Avatar>AC</Avatar>
          </TopBar>

          <Content>
            <FieldsPanel>
              <PanelHead $left={19}>
                <PanelTitle>Meine Ackerschläge (1)</PanelTitle>
              </PanelHead>
              <Toolbar $left={10} $right={10}>
                <OutlineButton $pad="0 12.5px 0 15px">
                  {fieldIcon}
                  <Count>0</Count>
                  <SmallText>0 ha</SmallText>
                  <Caret $left={1.5} />
                </OutlineButton>
                <Group>
                  <Segment $w={90} $gap={5}>{listIcon} Liste</Segment>
                  <Segment $w={100} $gap={5} $on><MapIcon w={20} sw={2.200} /> Karte</Segment>
                  <Segment $w={110} $gap={5}>{gridIcon} Tabelle</Segment>
                </Group>
              </Toolbar>
              <MapArea>
                <FieldMap />
                <ZoomControl>
                  <ZoomButton $off><Icon w={14} h={14} box="0 0 14 14"><path d="M1.500 7h11M7 1.500v11" /></Icon></ZoomButton>
                  <ZoomButton><Icon w={12} h={4} box="0 0 12 4" sw={3}><path d="M2 2h8" /></Icon></ZoomButton>
                </ZoomControl>
                <LayersButton><Bar /><Bar /><Bar /></LayersButton>
                <Attribution>© OpenStreetMap contributors</Attribution>
              </MapArea>
            </FieldsPanel>

            <RecordsPanel>
              <PanelHead $left={17}>
                <PanelTitle>Meine Aufzeichnungen (4)</PanelTitle>
                <PrimaryButton $pad="0 16px 0 12.5px" $gap={7}><Plus size={20} strokeWidth={2.200} />Kopieren</PrimaryButton>
              </PanelHead>
              <Toolbar $left={7.5} $right={9}>
                <OutlineButton $pad="0 15px 0 14px" $gap={14}>{minusBox}Alle abwählen (2)</OutlineButton>
                <Group>
                  <Segment $w={225} $gap={9}>{printIcon}Aufgaben drucken</Segment>
                  <Segment $w={119} $gap={8.5} $on>{chainIcon}Auftrag</Segment>
                  <Segment $w={124} $gap={10}>{trashIcon}Löschen</Segment>
                  <Segment $w={34} $gap={0}>{kebab}</Segment>
                </Group>
              </Toolbar>
              <Scroller>
                <CardList>
                  <RecordCard height={207} title="Pflanzen, setzen, säen" subtitle="Einpflanzen von Kartoffeln" area="0,73 ha" checked menu planned>
                    <ChargeRow>
                      <ChargeText>Kartoffel (Akira)</ChargeText>
                      <ChargeButton $pad="0 13.5px 0 15px" $gap={8.5}>Zur Charge <ArrowRight size={19} strokeWidth={2.200} /></ChargeButton>
                    </ChargeRow>
                  </RecordCard>
                  <RecordCard height={213} title="Pflanzenschutz" subtitle="Pflanzenschutz (üblich)" area="0,73 ha" checked focus menu warn planned>
                    <Product name="ADDITION" dose="5,00" unit="l/ha" />
                    <Product name="1,4SIGHT" dose="2,00" unit="kg/ha" />
                  </RecordCard>
                  <RecordCard height={213} title="Pflanzenschutz" subtitle="Pflanzenschutz (üblich)" area="0,72 ha" prescription>
                    {"3in1 Komplett-Rasendünger Gegen Unkraut\n&amp; Moos"}
                  </RecordCard>
                </CardList>
                <Track><Thumb /></Track>
              </Scroller>
            </RecordsPanel>

            <Rail>
              {tools.map((t, i) => (
                <Tool key={i} $drop={t.drop}>
                  {t.icon}
                  {t.count && <ToolCount>{t.count}</ToolCount>}
                  {t.caret && <ToolCaret><Caret $color="#4c5a57" /></ToolCaret>}
                </Tool>
              ))}
            </Rail>
          </Content>
        </Main>

        <Step $x={271} $y={170.5}>1</Step>
        <Step $x={1167} $y={388}>2</Step>
        <Step $x={1833} $y={179}>3</Step>
      </Shell>
    </>
  );
}
